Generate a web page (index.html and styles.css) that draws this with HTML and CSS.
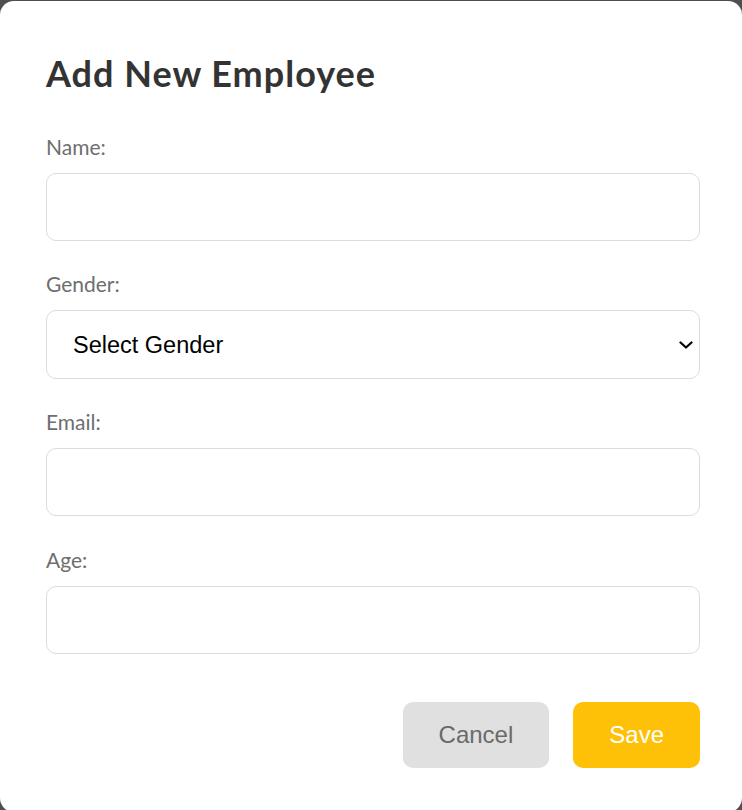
FILE: index.html
```html
<!DOCTYPE html>
<html lang="en">
<head>
<meta charset="utf-8">
<title>Add New Employee</title>
<link rel="stylesheet" href="styles.css">
</head>
<body>
<div class="modal">
  <h2 class="title">Add New Employee</h2>
  <form class="form">
    <div class="group">
      <label class="label" for="name">Name:</label>
      <input class="field" id="name" type="text">
    </div>
    <div class="group">
      <label class="label" for="gender">Gender:</label>
      <div class="select-wrap">
        <select class="field select" id="gender">
          <option>Select Gender</option>
          <option>Male</option>
          <option>Female</option>
        </select>
        <svg class="chev" width="14" height="8" viewBox="0 0 14 8"><path d="M1.5 1.5 L7 6.5 L12.5 1.5" fill="none" stroke="#000" stroke-width="2.2" stroke-linecap="round" stroke-linejoin="round"/></svg>
      </div>
    </div>
    <div class="group group-wide">
      <label class="label" for="email">Email:</label>
      <input class="field" id="email" type="email">
    </div>
    <div class="group group-wide">
      <label class="label" for="age">Age:</label>
      <input class="field" id="age" type="number">
    </div>
    <div class="actions">
      <button type="button" class="btn btn-cancel">Cancel</button>
      <button type="button" class="btn btn-save">Save</button>
    </div>
  </form>
</div>
</body>
</html>
```
FILE: styles.css
```css
html, body {
  margin: 0;
  padding: 0;
}
body {
  background: #4f4f4f;
  height: 810px;
  overflow: hidden;
}
.modal {
  margin-top: 1px;
  background: #fff;
  border-radius: 14px;
  height: 811px;
  box-sizing: border-box;
  padding: 51px 42px 0 46px;
}
.title {
  margin: 0;
  font-family: Lato, "Open Sans", sans-serif;
  font-weight: 700;
  font-size: 36px;
  letter-spacing: 1px;
  line-height: 42px;
  color: #333;
}
.form {
  margin-top: 41px;
  display: flex;
  flex-direction: column;
}
.group {
  display: flex;
  flex-direction: column;
  margin-bottom: 31px;
}
.group-wide {
  margin-bottom: 32px;
}
.label {
  font-family: Lato, "Open Sans", sans-serif;
  font-size: 21px;
  line-height: 24px;
  color: #6e6e6e;
  margin-bottom: 14px;
}
.field {
  box-sizing: border-box;
  width: 654px;
  height: 68px;
  border: 1px solid #dcdcdc;
  border-radius: 10px;
  background: #fff;
  font-family: "Liberation Sans", Arial, sans-serif;
  font-size: 23.5px;
  color: #000;
  padding: 0 26px;
  outline: none;
  margin: 0;
}
.select-wrap {
  position: relative;
  width: 654px;
  display: flex;
}
.select {
  height: 69px;
  -webkit-appearance: none;
  appearance: none;
}
.chev {
  position: absolute;
  right: 7px;
  top: 31px;
  pointer-events: none;
}
.actions {
  display: flex;
  justify-content: flex-end;
  gap: 24px;
  width: 654px;
  margin-top: 16px;
}
.btn {
  height: 66px;
  border: none;
  border-radius: 10px;
  font-family: "Liberation Sans", Arial, sans-serif;
  font-size: 24px;
  padding: 0 36px;
  cursor: pointer;
}
.btn-cancel {
  background: #e0e0e0;
  color: #6a6a6a;
}
.btn-save {
  background: #fec107;
  color: #fff;
}
```
